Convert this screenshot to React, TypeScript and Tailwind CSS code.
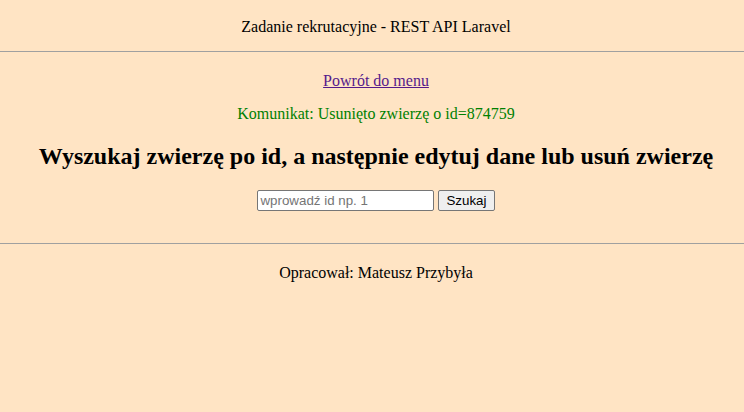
export default function App() {
  return (
    <div className="min-h-[412px] bg-[#ffe4c4] text-black font-['Liberation_Serif',serif] text-[16px] leading-[18px]">
      <header className="h-[51px] flex items-center justify-center pt-[2px] pl-[8px]">
        <p>Zadanie rekrutacyjne - REST API Laravel</p>
      </header>
      <hr className="border-0 border-t border-[#a0a0a0] h-0" />
      <main className="flex flex-col items-center pt-[20px] pl-[8px]">
        <a href="#" className="underline text-[#551a8b]">Powrót do menu</a>
        <p className="mt-[15px] text-[#008000]">Komunikat: Usunięto zwierzę o id=874759</p>
        <h1 className="mt-[19px] text-[24px] leading-[28px] font-bold">
          Wyszukaj zwierzę po id, a następnie edytuj dane lub usuń zwierzę
        </h1>
        <form className="mt-[20px] flex items-center gap-[4px] font-['Liberation_Sans',sans-serif] text-[13.33px]">
          <input
            type="text"
            placeholder="wprowadź id np. 1"
            className="w-[177px] h-[21px] px-[2px] bg-white border border-[#767676] placeholder:text-[#757575] rounded-[2px]"
          />
          <button
            type="button"
            className="h-[21px] px-[7px] bg-[#efefef] border border-[#767676] rounded-[2px]"
          >
            Szukaj
          </button>
        </form>
      </main>
      <hr className="mt-[32px] border-0 border-t border-[#a0a0a0] h-0" />
      <footer className="flex justify-center pt-[20px] pl-[8px]">
        <p>Opracował: Mateusz Przybyła</p>
      </footer>
    </div>
  );
}
